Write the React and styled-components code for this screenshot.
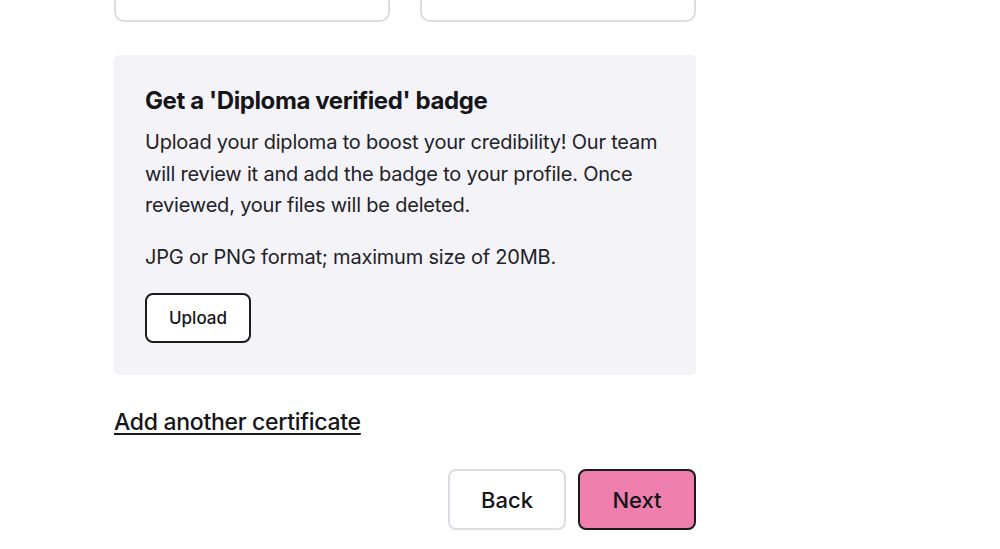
import React from 'react'
import styled, { createGlobalStyle } from 'styled-components'

const GlobalStyle = createGlobalStyle`
  html, body {
    margin: 0;
    padding: 0;
    background: #ffffff;
  }
  body {
    font-family: Inter, "Noto Sans", sans-serif;
    color: #1b1b1f;
    -webkit-font-smoothing: antialiased;
  }
`

const Page = styled.main`
  width: 582px;
  padding-left: 114px;
  display: flex;
  flex-direction: column;
`

const CardRow = styled.div`
  display: grid;
  grid-template-columns: 1fr 1fr;
  column-gap: 30px;
`

const CardStub = styled.div`
  height: 20px;
  border: 2px solid #dcdce6;
  border-top: none;
  border-radius: 0 0 10px 10px;
  background: #fff;
`

const Panel = styled.section`
  margin-top: 33px;
  background: #f4f4f8;
  border-radius: 5px;
  padding: 31px 31px 32px;
  display: flex;
  flex-direction: column;
  align-items: flex-start;
`

const Title = styled.h2`
  margin: 0 0 11px;
  font-size: 24px;
  line-height: 30px;
  font-weight: 700;
  letter-spacing: -0.4px;
  color: #15151a;
`

const Text = styled.p`
  margin: 0 0 ${(p) => p.$gap || 0}px;
  font-size: 20px;
  line-height: 31.5px;
  font-weight: 400;
  letter-spacing: -0.2px;
  color: #222227;
`

const OutlineButton = styled.button`
  font-family: inherit;
  font-size: 17px;
  font-weight: 500;
  color: #15151a;
  background: #fff;
  border: 2px solid #1b1b1f;
  border-radius: 8px;
  width: 106px;
  height: 50px;
  padding: 0;
  cursor: pointer;
`

const LinkText = styled.a`
  margin-top: 33px;
  align-self: flex-start;
  font-size: 23px;
  line-height: 29px;
  font-weight: 500;
  letter-spacing: -0.3px;
  color: #15151a;
  text-decoration: underline;
  text-decoration-thickness: 2px;
  text-underline-offset: 3px;
  cursor: pointer;
`

const Actions = styled.div`
  margin-top: 32px;
  display: flex;
  justify-content: flex-end;
  gap: 12px;
`

const NavButton = styled.button`
  font-family: inherit;
  font-size: 22px;
  font-weight: 500;
  color: #15151a;
  width: 118px;
  height: 61px;
  padding: 0;
  border-radius: 8px;
  border: 2px solid ${(p) => (p.$primary ? '#1b1b1f' : '#dcdce6')};
  background: ${(p) => (p.$primary ? '#ef80ae' : '#ffffff')};
  cursor: pointer;
`

export default function App() {
  return (
    <>
      <GlobalStyle />
      <Page>
        <CardRow>
          <CardStub />
          <CardStub />
        </CardRow>
        <Panel>
          <Title>Get a 'Diploma verified' badge</Title>
          <Text $gap={20}>
            Upload your diploma to boost your credibility! Our team will review it and add the
            badge to your profile. Once reviewed, your files will be deleted.
          </Text>
          <Text $gap={20}>JPG or PNG format; maximum size of 20MB.</Text>
          <OutlineButton>Upload</OutlineButton>
        </Panel>
        <LinkText>Add another certificate</LinkText>
        <Actions>
          <NavButton>Back</NavButton>
          <NavButton $primary>Next</NavButton>
        </Actions>
      </Page>
    </>
  )
}
